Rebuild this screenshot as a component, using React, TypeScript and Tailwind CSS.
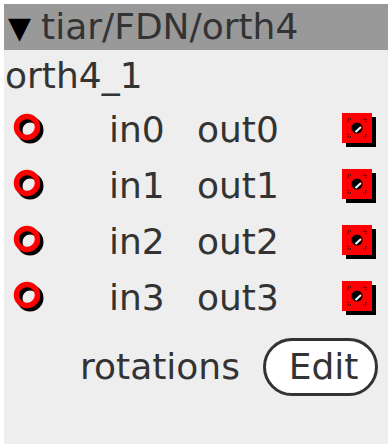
import React from "react";

const ports = [0, 1, 2, 3];

function InPort() {
  return (
    <svg width="36" height="36" viewBox="0 0 36 36" className="shrink-0">
      <circle cx="17" cy="18" r="10.5" fill="none" stroke="#000" strokeWidth="6" />
      <circle cx="14" cy="15" r="10.5" fill="none" stroke="#ff0000" strokeWidth="5.5" />
    </svg>
  );
}

function OutPort() {
  return (
    <svg width="36" height="36" viewBox="0 0 36 36" className="shrink-0">
      <rect x="5" y="5" width="30" height="30" fill="#000" />
      <rect x="1" y="1" width="30" height="30" fill="#ff0000" />
      {/* уголки */}
      <path d="M7 10V7h3M22 7h3v3M25 22v3h-3M10 25H7v-3" fill="none" stroke="#000" strokeWidth="1" strokeDasharray="1.5 1" />
      <circle cx="16" cy="16" r="5.5" fill="#000" />
      <path d="M14.5 20 L20 15" stroke="#fff" strokeWidth="2" />
    </svg>
  );
}

export default function App() {
  return (
    <div className="w-[392px] h-[448px] bg-white p-1" style={{ fontFamily: '"DejaVu Sans", sans-serif' }}>
      <div className="w-[384px] h-[440px] bg-[#eeeeee] text-[#333333] text-[36px] leading-none">
        <div className="h-[46px] bg-[#999999] flex items-center pl-[4px] gap-[10px]">
          <span className="text-black text-[30px] mt-[2px]">▼</span>
          <span>tiar/FDN/orth4</span>
        </div>
        <div className="h-[52px] flex items-center pl-[1px]">orth4_1</div>
        <div className="flex flex-col">
          {ports.map((p) => (
            <div key={p} className="h-[56px] flex items-center">
              <div className="w-[105px] shrink-0 pl-[9px] flex items-center">
                <InPort />
              </div>
              <div className="w-[88px] shrink-0">in{p}</div>
              <div className="w-[144px] shrink-0">out{p}</div>
              <OutPort />
            </div>
          ))}
        </div>
        <div className="flex items-center mt-[12px] h-[58px]">
          <span className="ml-[76px] w-[183px] shrink-0">rotations</span>
          <button className="w-[115px] h-[58px] shrink-0 rounded-full border-[3px] border-[#333333] bg-white text-[36px] leading-none text-[#333333] pl-[6px]">
            Edit
          </button>
        </div>
      </div>
    </div>
  );
}
